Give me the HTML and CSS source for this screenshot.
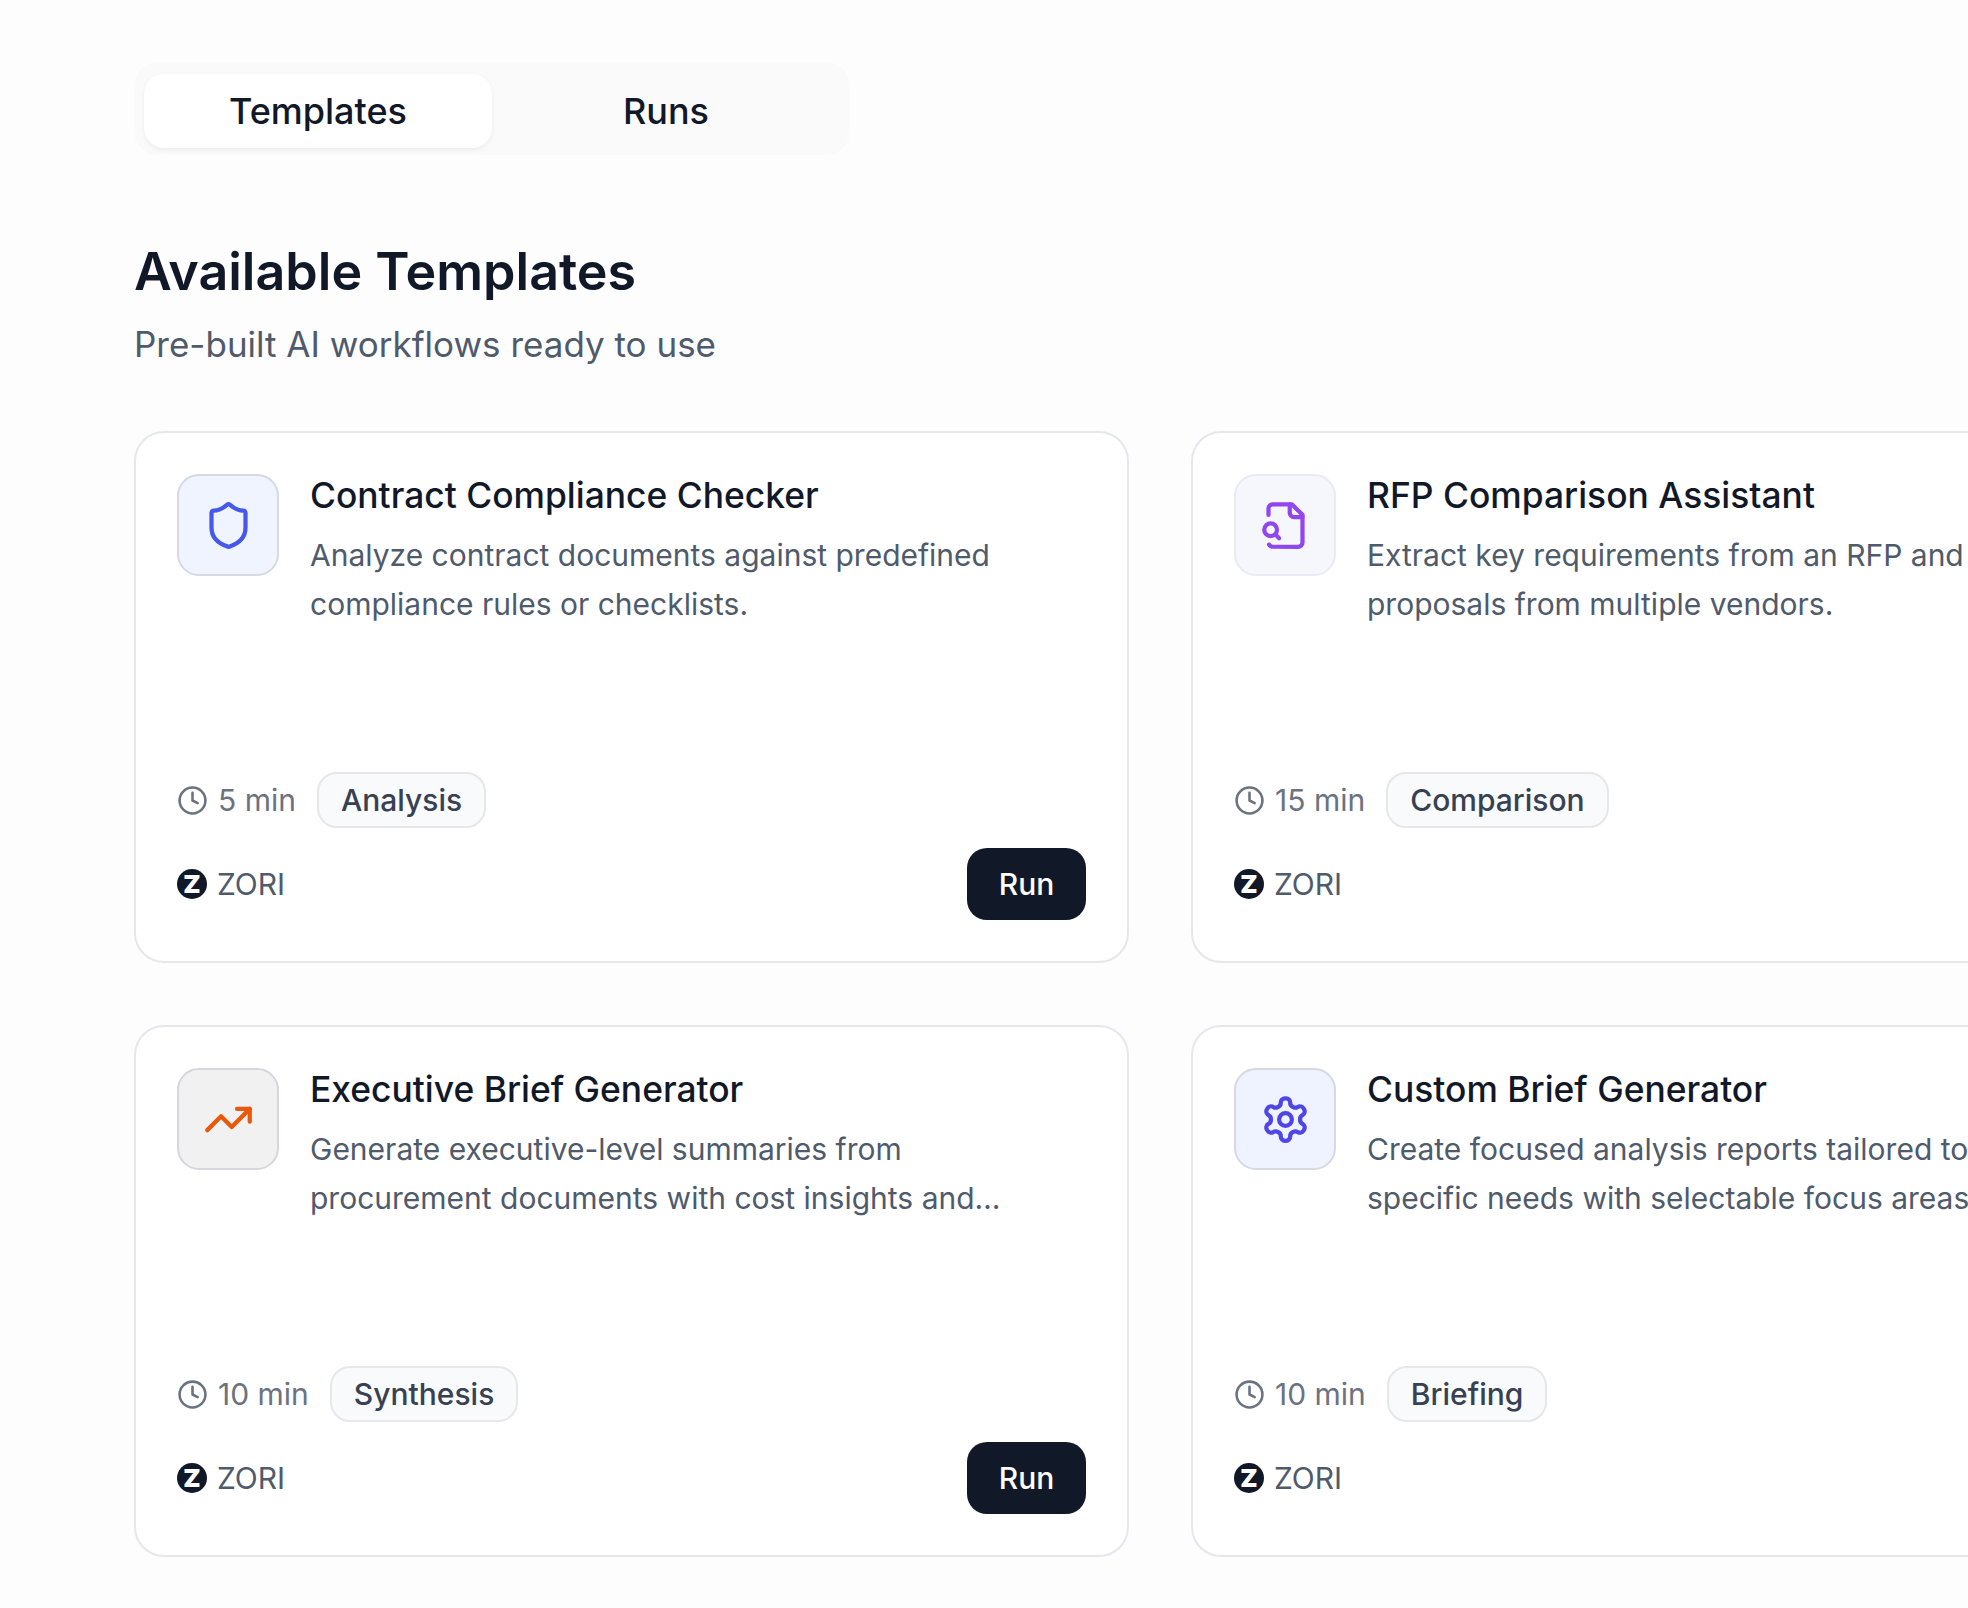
FILE: index.html
```html
<!DOCTYPE html>
<html>
	<head>
		<meta charset="utf-8" />
		<title>Templates</title>
		<link rel="stylesheet" href="styles.css">
	</head>
	<body>
		<svg class="defs" width="0" height="0">
			<symbol id="clock" viewBox="0 0 24 24"><circle cx="12" cy="12" r="10" /><polyline points="12 6 12 12 16 14" /></symbol>
		</svg>
		<div class="page">
			<div class="tabs">
				<button class="tab tab-active">Templates</button>
				<button class="tab">Runs</button>
			</div>

			<h1 class="heading">Available Templates</h1>
			<p class="subheading">Pre-built AI workflows ready to use</p>

			<div class="grid">
				<div class="card">
					<div class="card-top">
						<div class="icon-box box-blue">
							<svg class="icon icon-blue" viewBox="0 0 24 24"><path d="M20 13c0 5-3.5 7.5-7.66 8.95a1 1 0 0 1-.67-.01C7.5 20.5 4 18 4 13V6a1 1 0 0 1 1-1c2 0 4.5-1.2 6.24-2.72a1.17 1.17 0 0 1 1.52 0C14.51 3.81 17 5 19 5a1 1 0 0 1 1 1z" /></svg>
						</div>
						<div class="card-text">
							<h3 class="card-title">Contract Compliance Checker</h3>
							<p class="card-desc">Analyze contract documents against predefined compliance rules or checklists.</p>
						</div>
					</div>
					<div class="meta">
						<span class="time"><svg class="clock"><use href="#clock" /></svg>5 min</span>
						<span class="pill">Analysis</span>
					</div>
					<div class="card-foot">
						<span class="brand"><span class="brand-mark">Z</span>ZORI</span>
						<button class="run">Run</button>
					</div>
				</div>

				<div class="card">
					<div class="card-top">
						<div class="icon-box box-purple">
							<svg class="icon icon-purple" viewBox="0 0 24 24"><path d="M14 2v4a2 2 0 0 0 2 2h4" /><path d="M4.268 21a2 2 0 0 0 1.727 1H18a2 2 0 0 0 2-2V7l-5-5H6a2 2 0 0 0-2 2v3" /><path d="m9 18-1.5-1.5" /><circle cx="5" cy="14" r="3" /></svg>
						</div>
						<div class="card-text">
							<h3 class="card-title">RFP Comparison Assistant</h3>
							<p class="card-desc">Extract key requirements from an RFP and compare proposals from multiple vendors.</p>
						</div>
					</div>
					<div class="meta">
						<span class="time"><svg class="clock"><use href="#clock" /></svg>15 min</span>
						<span class="pill">Comparison</span>
					</div>
					<div class="card-foot">
						<span class="brand"><span class="brand-mark">Z</span>ZORI</span>
						<button class="run">Run</button>
					</div>
				</div>

				<div class="card">
					<div class="card-top">
						<div class="icon-box box-gray">
							<svg class="icon icon-orange" viewBox="0 0 24 24"><path d="M16 7h6v6" /><path d="m22 7-8.5 8.5-5-5L2 17" /></svg>
						</div>
						<div class="card-text">
							<h3 class="card-title">Executive Brief Generator</h3>
							<p class="card-desc clamp">Generate executive-level summaries from procurement documents with cost insights and recommendations for leadership teams.</p>
						</div>
					</div>
					<div class="meta">
						<span class="time"><svg class="clock"><use href="#clock" /></svg>10 min</span>
						<span class="pill">Synthesis</span>
					</div>
					<div class="card-foot">
						<span class="brand"><span class="brand-mark">Z</span>ZORI</span>
						<button class="run">Run</button>
					</div>
				</div>

				<div class="card">
					<div class="card-top">
						<div class="icon-box box-indigo">
							<svg class="icon icon-indigo" viewBox="0 0 24 24"><path d="M12.22 2h-.44a2 2 0 0 0-2 2v.18a2 2 0 0 1-1 1.73l-.43.25a2 2 0 0 1-2 0l-.15-.08a2 2 0 0 0-2.73.73l-.22.38a2 2 0 0 0 .73 2.73l.15.1a2 2 0 0 1 1 1.72v.51a2 2 0 0 1-1 1.74l-.15.09a2 2 0 0 0-.73 2.73l.22.38a2 2 0 0 0 2.73.73l.15-.08a2 2 0 0 1 2 0l.43.25a2 2 0 0 1 1 1.73V20a2 2 0 0 0 2 2h.44a2 2 0 0 0 2-2v-.18a2 2 0 0 1 1-1.73l.43-.25a2 2 0 0 1 2 0l.15.08a2 2 0 0 0 2.73-.73l.22-.39a2 2 0 0 0-.73-2.73l-.15-.08a2 2 0 0 1-1-1.74v-.5a2 2 0 0 1 1-1.74l.15-.09a2 2 0 0 0 .73-2.73l-.22-.38a2 2 0 0 0-2.73-.73l-.15.08a2 2 0 0 1-2 0l-.43-.25a2 2 0 0 1-1-1.73V4a2 2 0 0 0-2-2z" /><circle cx="12" cy="12" r="3" /></svg>
						</div>
						<div class="card-text">
							<h3 class="card-title">Custom Brief Generator</h3>
							<p class="card-desc">Create focused analysis reports tailored to your specific needs with selectable focus areas.</p>
						</div>
					</div>
					<div class="meta">
						<span class="time"><svg class="clock"><use href="#clock" /></svg>10 min</span>
						<span class="pill">Briefing</span>
					</div>
					<div class="card-foot">
						<span class="brand"><span class="brand-mark">Z</span>ZORI</span>
						<button class="run">Run</button>
					</div>
				</div>
			</div>
		</div>
	</body>
</html>
```

FILE: styles.css
```css
html, body {
    margin: 0;
    height: 100%;
    overflow: hidden;
}

body {
    font-family: Inter, "Liberation Sans", sans-serif;
    background-color: #fdfdfe;
    color: #111827;
}

.defs { position: absolute; }

.page {
    width: 2186px;
    padding: 62px 0 0 134px;
}

/* tabs */
.tabs {
    display: flex;
    width: 716px;
    height: 93px;
    box-sizing: border-box;
    padding: 12px 10px 7px;
    background-color: #fafafa;
    border-radius: 24px;
}

.tab {
    flex: 1;
    border: none;
    background: none;
    border-radius: 20px;
    font-family: inherit;
    font-size: 36px;
    font-weight: 500;
    color: #111827;
}

.tab-active {
    background-color: #fff;
    box-shadow: 0 2px 5px rgba(0, 0, 0, 0.06);
}

/* header */
.heading {
    margin: 82px 0 0;
    font-size: 52px;
    line-height: 70px;
    font-weight: 600;
}

.subheading {
    margin: 12px 0 0;
    font-size: 35px;
    line-height: 50px;
    color: #4f5a6b;
}

/* cards */
.grid {
    display: grid;
    grid-template-columns: 995px 995px;
    grid-auto-rows: 532px;
    gap: 62px;
    margin-top: 62px;
}

.card {
    display: flex;
    flex-direction: column;
    box-sizing: border-box;
    padding: 41px;
    background-color: #fff;
    border: 2px solid #e5e7eb;
    border-radius: 30px;
}

.card-top {
    display: flex;
    flex: 1;
    gap: 31px;
}

.icon-box {
    display: flex;
    flex-shrink: 0;
    align-items: center;
    justify-content: center;
    width: 102px;
    height: 102px;
    box-sizing: border-box;
    border: 2px solid #d6d8e2;
    border-radius: 22px;
}

.box-blue { background-color: #eff4ff; }
.box-purple { background-color: #f6f7fd; border-color: #e8eaf6; }
.box-gray { background-color: #f1f1f1; border-color: #d6d6dc; }
.box-indigo { background-color: #eff2ff; }

.icon {
    width: 51px;
    height: 51px;
    fill: none;
    stroke: currentColor;
    stroke-width: 2;
    stroke-linecap: round;
    stroke-linejoin: round;
}

.icon-blue { color: #4558ea; }
.icon-purple { color: #9147ee; }
.icon-orange { color: #ea580c; }
.icon-indigo { color: #4f46e5; }

.card-text { flex: 1; min-width: 0; }

.card-title {
    margin: 0;
    font-size: 35.4px;
    line-height: 44px;
    font-weight: 500;
}

.card-desc {
    margin: 13px 0 0;
    font-size: 30px;
    line-height: 49px;
    color: #4f5a6b;
}

.clamp {
    display: -webkit-box;
    -webkit-line-clamp: 2;
    -webkit-box-orient: vertical;
    overflow: hidden;
}

.meta {
    display: flex;
    align-items: center;
    gap: 21px;
    height: 56px;
}

.time {
    display: flex;
    align-items: center;
    gap: 10px;
    font-size: 30px;
    color: #6b7280;
}

.clock {
    width: 31px;
    height: 31px;
    fill: none;
    stroke: currentColor;
    stroke-width: 2;
    stroke-linecap: round;
    stroke-linejoin: round;
}

.pill {
    padding: 0 22px;
    line-height: 52px;
    font-size: 30px;
    font-weight: 500;
    color: #374151;
    background-color: #f9fafb;
    border: 2px solid #e5e7eb;
    border-radius: 20px;
}

.card-foot {
    display: flex;
    align-items: center;
    justify-content: space-between;
    margin-top: 20px;
}

.brand {
    display: flex;
    align-items: center;
    gap: 10px;
    font-size: 30px;
    color: #4f5a6b;
}

.brand-mark {
    display: flex;
    align-items: center;
    justify-content: center;
    width: 30px;
    height: 30px;
    border-radius: 50%;
    background-color: #111827;
    color: #fff;
    font-size: 25px;
    font-weight: 900;
}

.run {
    width: 119px;
    height: 72px;
    border: none;
    border-radius: 20px;
    background-color: #111827;
    color: #fff;
    font-family: inherit;
    font-size: 30px;
    font-weight: 500;
}
```
